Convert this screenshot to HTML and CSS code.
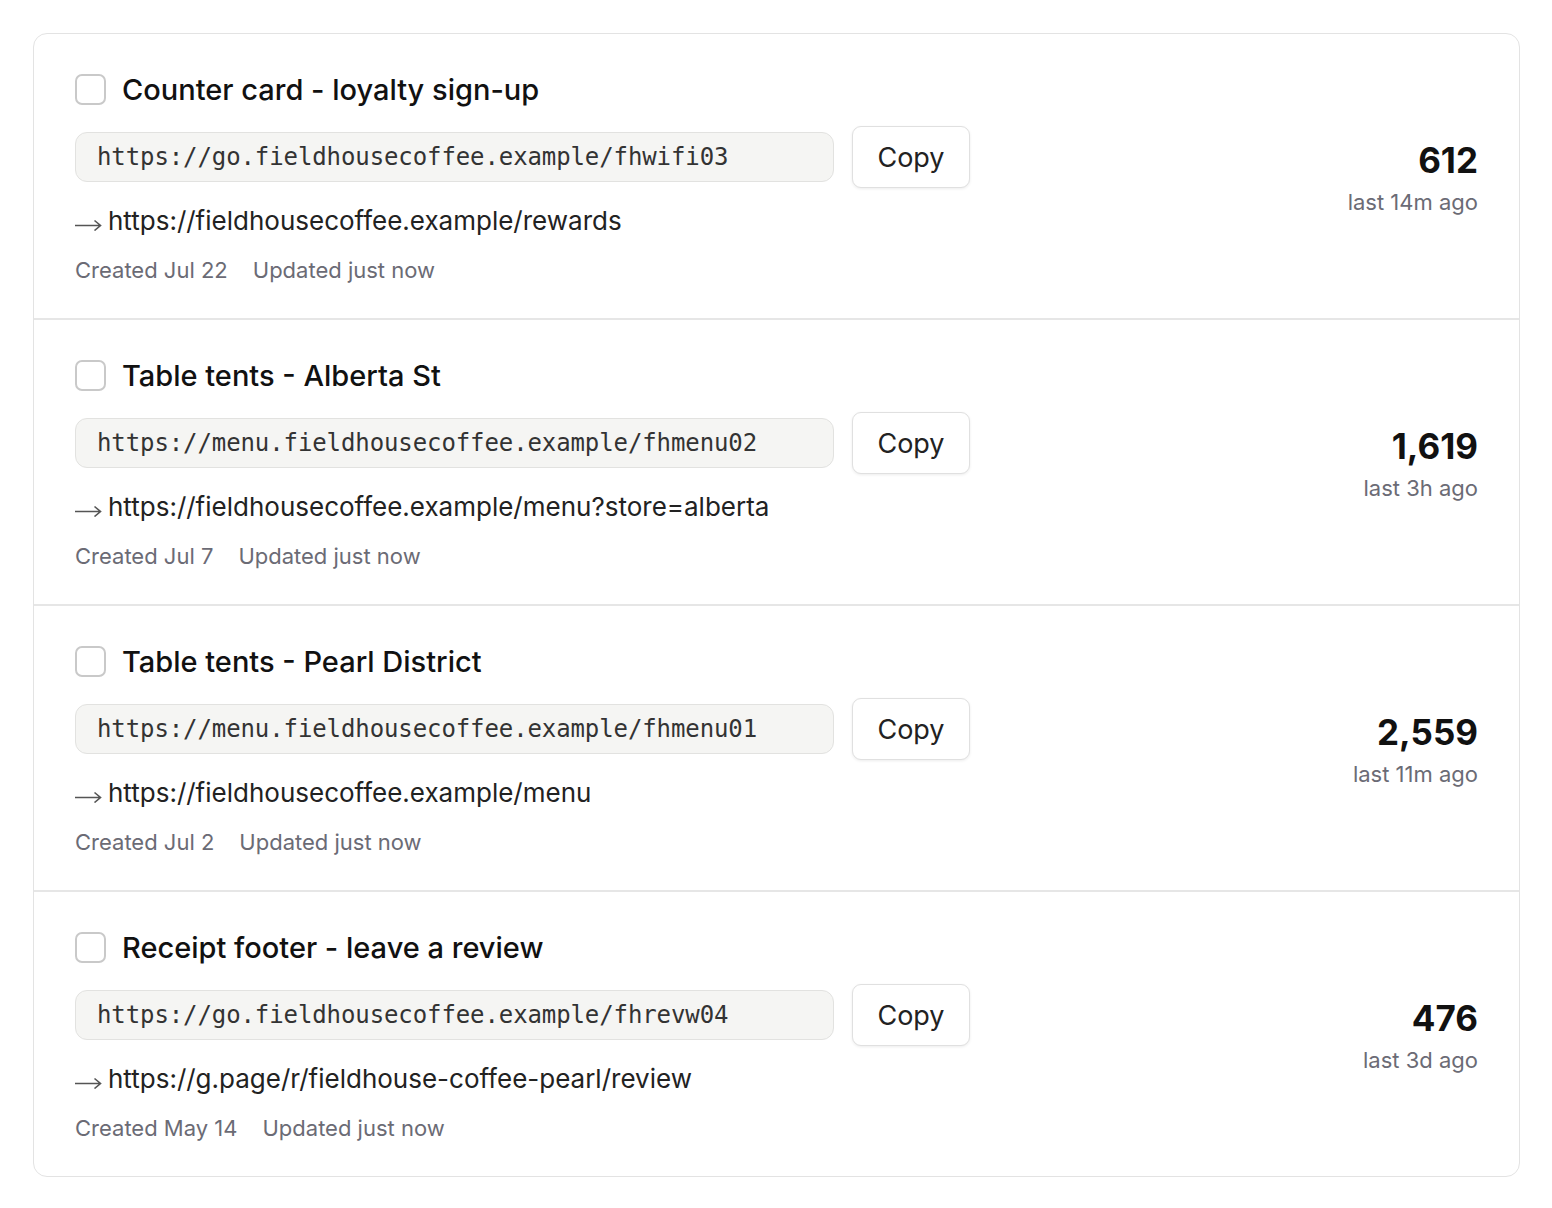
FILE: index.html
```html
<!DOCTYPE html>
<html>
<head>
<meta charset="utf-8">
<link rel="stylesheet" href="styles.css">
</head>
<body>
<div class="card">
  <div class="row">
    <div class="main">
      <div class="title-line"><span class="check"></span><span class="title">Counter card - loyalty sign-up</span></div>
      <div class="url-line"><div class="url-box">https://go.fieldhousecoffee.example/fhwifi03</div><button class="copy">Copy</button></div>
      <div class="dest"><svg class="arrow" width="27" height="12" viewBox="0 0 27 12"><path d="M0 6.5H25M19.5 1.5L25.5 6.5L19.5 11.5" fill="none" stroke="#555" stroke-width="1.6"/></svg>https://fieldhousecoffee.example/rewards</div>
      <div class="meta"><span>Created Jul 22</span><span>Updated just now</span></div>
    </div>
    <div class="stats"><div class="count">612</div><div class="last">last 14m ago</div></div>
  </div>
  <div class="row">
    <div class="main">
      <div class="title-line"><span class="check"></span><span class="title">Table tents - Alberta St</span></div>
      <div class="url-line"><div class="url-box">https://menu.fieldhousecoffee.example/fhmenu02</div><button class="copy">Copy</button></div>
      <div class="dest"><svg class="arrow" width="27" height="12" viewBox="0 0 27 12"><path d="M0 6.5H25M19.5 1.5L25.5 6.5L19.5 11.5" fill="none" stroke="#555" stroke-width="1.6"/></svg>https://fieldhousecoffee.example/menu?store=alberta</div>
      <div class="meta"><span>Created Jul 7</span><span>Updated just now</span></div>
    </div>
    <div class="stats"><div class="count">1,619</div><div class="last">last 3h ago</div></div>
  </div>
  <div class="row">
    <div class="main">
      <div class="title-line"><span class="check"></span><span class="title">Table tents - Pearl District</span></div>
      <div class="url-line"><div class="url-box">https://menu.fieldhousecoffee.example/fhmenu01</div><button class="copy">Copy</button></div>
      <div class="dest"><svg class="arrow" width="27" height="12" viewBox="0 0 27 12"><path d="M0 6.5H25M19.5 1.5L25.5 6.5L19.5 11.5" fill="none" stroke="#555" stroke-width="1.6"/></svg>https://fieldhousecoffee.example/menu</div>
      <div class="meta"><span>Created Jul 2</span><span>Updated just now</span></div>
    </div>
    <div class="stats"><div class="count">2,559</div><div class="last">last 11m ago</div></div>
  </div>
  <div class="row">
    <div class="main">
      <div class="title-line"><span class="check"></span><span class="title">Receipt footer - leave a review</span></div>
      <div class="url-line"><div class="url-box">https://go.fieldhousecoffee.example/fhrevw04</div><button class="copy">Copy</button></div>
      <div class="dest"><svg class="arrow" width="27" height="12" viewBox="0 0 27 12"><path d="M0 6.5H25M19.5 1.5L25.5 6.5L19.5 11.5" fill="none" stroke="#555" stroke-width="1.6"/></svg>https://g.page/r/fieldhouse-coffee-pearl/review</div>
      <div class="meta"><span>Created May 14</span><span>Updated just now</span></div>
    </div>
    <div class="stats"><div class="count">476</div><div class="last">last 3d ago</div></div>
  </div>
</div>
</body>
</html>
```
FILE: styles.css
```css
html, body {
  margin: 0;
  padding: 0;
  background: #ffffff;
}
body {
  padding: 33px 32px 31px 33px;
  font-family: Inter, "Liberation Sans", sans-serif;
  color: #111111;
}
.card {
  border: 1px solid #e3e3e3;
  border-radius: 14px;
  background: #fff;
}
.row {
  display: flex;
  align-items: center;
  justify-content: space-between;
  padding: 37px 41px 34px 41px;
  border-bottom: 2px solid #e6e6e6;
}
.row:last-child {
  border-bottom: none;
}
.main {
  display: flex;
  flex-direction: column;
}
.title-line {
  display: flex;
  align-items: center;
  gap: 16px;
  height: 36px;
}
.check {
  box-sizing: content-box;
  width: 27px;
  height: 27px;
  border: 2px solid #c9c9c9;
  border-radius: 7px;
}
.title {
  font-size: 29px;
  font-weight: 500;
  letter-spacing: 0;
  color: #111;
}
.url-line {
  display: flex;
  align-items: center;
  gap: 18px;
  margin-top: 19px;
}
.url-box {
  width: 736px;
  height: 48px;
  line-height: 48px;
  padding-left: 21px;
  border: 1px solid #e2e2e0;
  border-radius: 12px;
  background: #f5f5f3;
  font-family: "DejaVu Sans Mono", "Liberation Mono", monospace;
  font-size: 24px;
  letter-spacing: -0.1px;
  color: #333;
}
.copy {
  width: 118px;
  height: 62px;
  border: 1px solid #e0e0e0;
  border-radius: 9px;
  background: #fff;
  box-shadow: 0 1px 3px rgba(0,0,0,0.08);
  font-family: Inter, "Liberation Sans", sans-serif;
  font-size: 27px;
  color: #222;
  padding: 0;
}
.dest {
  margin-top: 16px;
  line-height: 34px;
  font-size: 26px;
  color: #222;
  letter-spacing: 0;
}
.arrow {
  display: inline-block;
  vertical-align: -1px;
  margin-right: 6px;
}
.meta {
  margin-top: 18px;
  line-height: 28px;
  font-size: 22px;
  color: #6b6b75;
  display: flex;
  gap: 25px;
  letter-spacing: 0;
}
.stats {
  display: flex;
  flex-direction: column;
  align-items: flex-end;
  gap: 8px;
}
.count {
  font-size: 35px;
  font-weight: 700;
  line-height: 40px;
  color: #111;
}
.last {
  font-size: 22px;
  line-height: 28px;
  color: #6b6b75;
  letter-spacing: 0;
}
```
